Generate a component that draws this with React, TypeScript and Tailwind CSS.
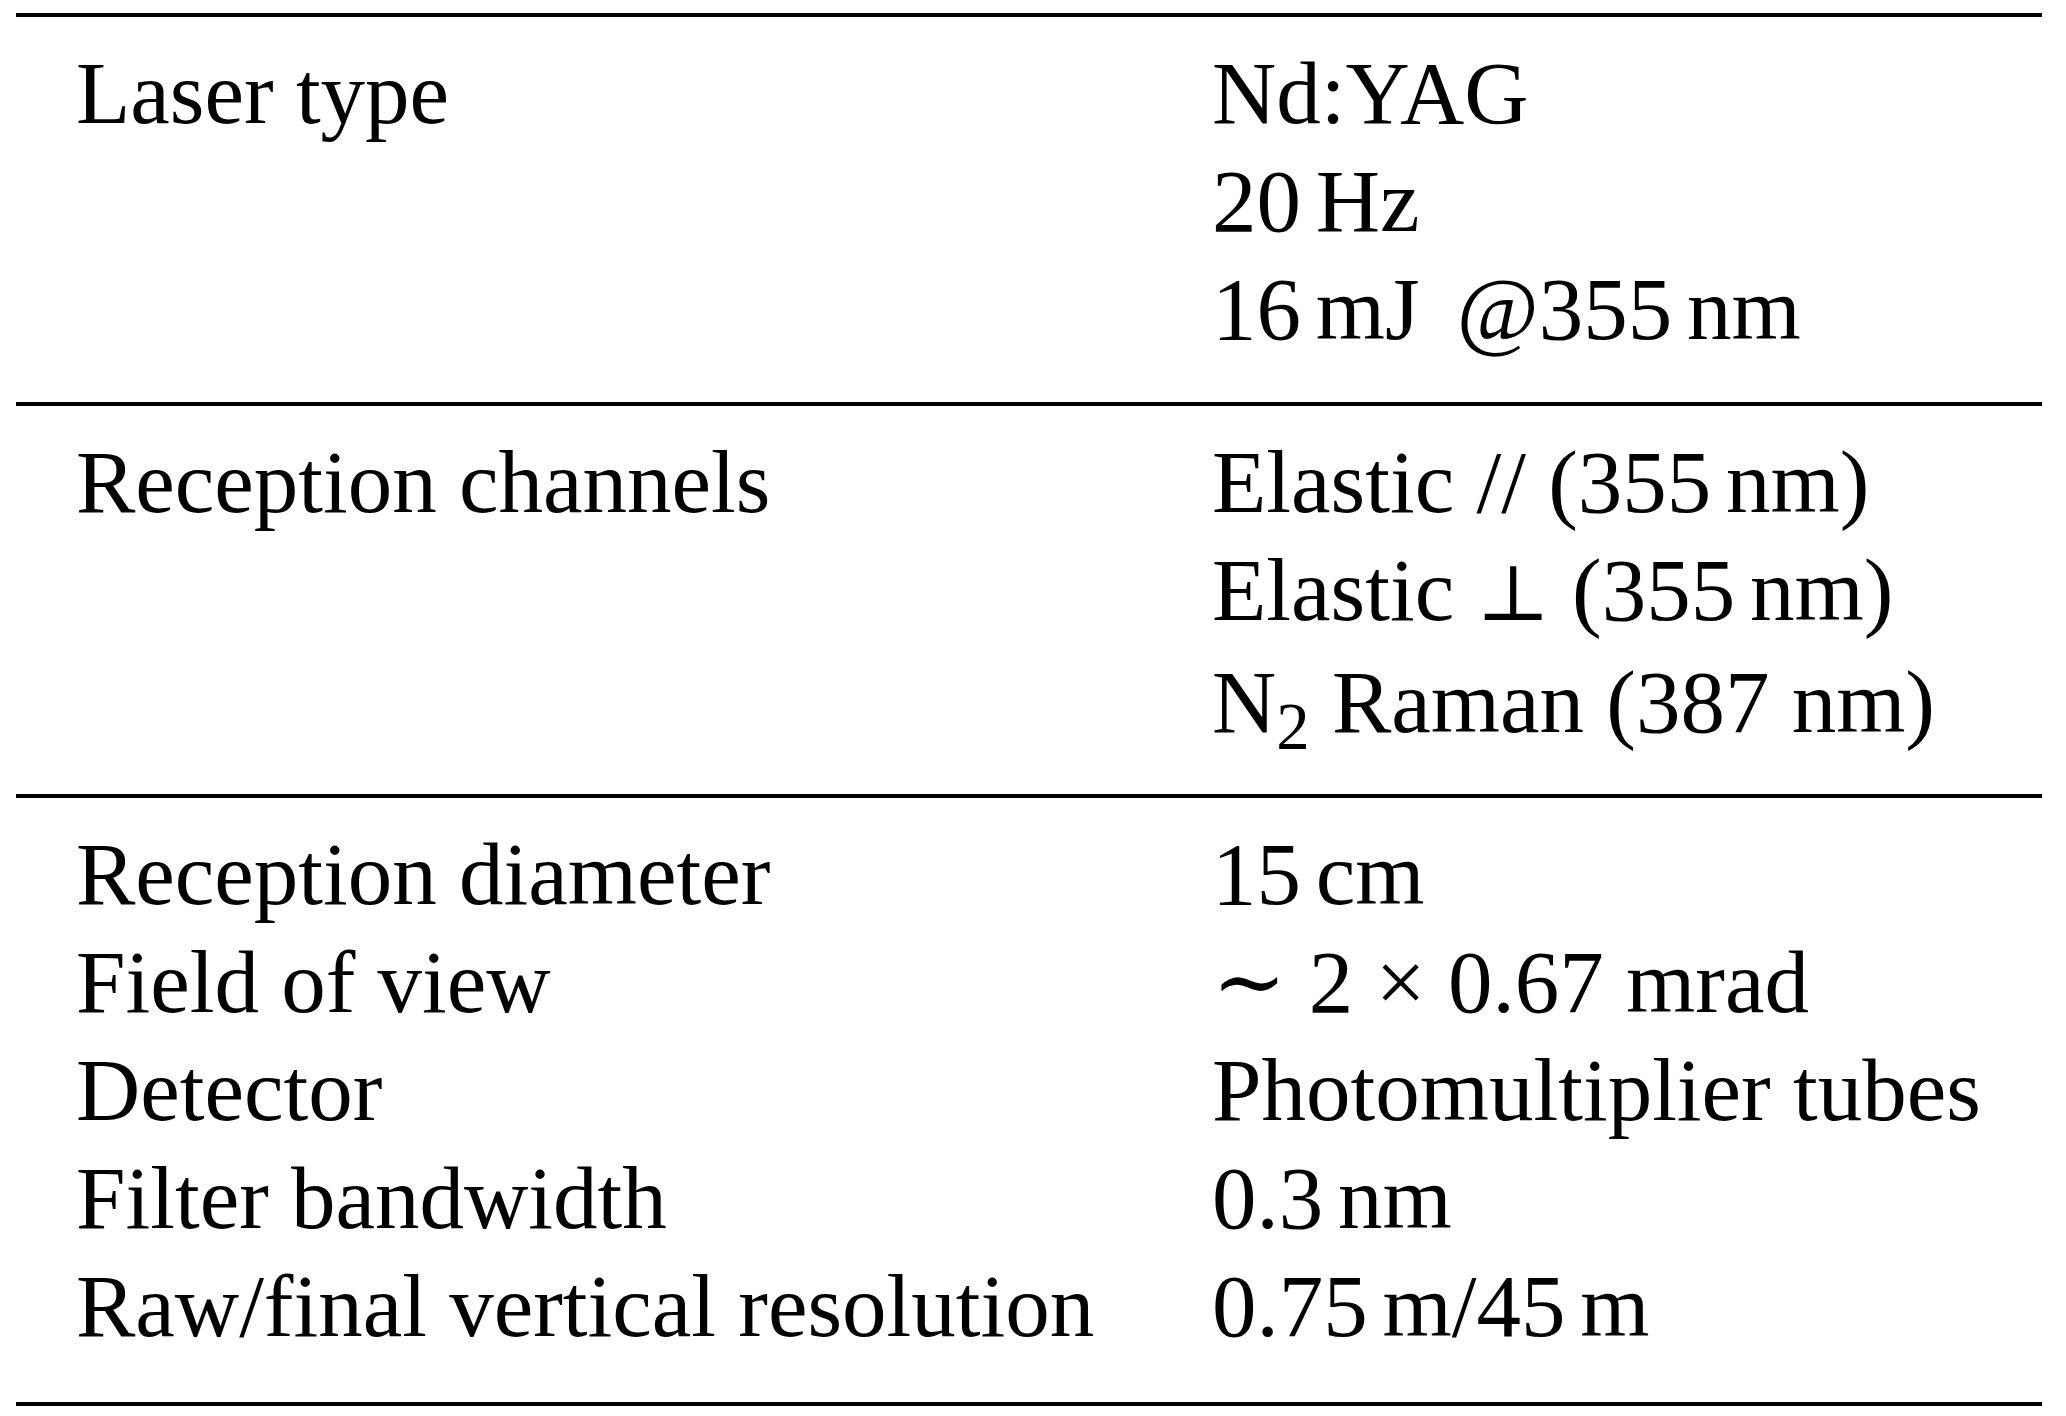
const groups: { label: string; value: React.ReactNode }[][] = [
  [
    { label: "Laser type", value: "Nd:YAG" },
    { label: "", value: "20\u2006Hz" },
    { label: "", value: "16\u2006mJ \u2006@355\u2006nm" },
  ],
  [
    { label: "Reception channels", value: "Elastic // (355\u2006nm)" },
    {
      label: "",
      value: (
        <>
          Elastic <span className="text-[78px]">{"\u22A5"}</span> (355{"\u2006"}nm)
        </>
      ),
    },
    {
      label: "",
      value: (
        <>
          N<sub>2</sub> Raman (387 nm)
        </>
      ),
    },
  ],
  [
    { label: "Reception diameter", value: "15\u2006cm" },
    { label: "Field of view", value: "\u223C 2 \u00D7 0.67 mrad" },
    { label: "Detector", value: "Photomultiplier tubes" },
    { label: "Filter bandwidth", value: "0.3\u2006nm" },
    { label: "Raw/final vertical resolution", value: "0.75\u2006m/45\u2006m" },
  ],
];

// bottom padding per block, the last one sits a bit lower
const padBottom = ["pb-[39px]", "pb-[38px]", "pb-[42px]"];

const App = () => {
  return (
    <div
      className="w-[2066px] h-[1416px] bg-white pt-[13px] pl-[16px] pr-[24px] text-black text-[89px] leading-[108px]"
      style={{ fontFamily: '"Liberation Serif", "DejaVu Serif", serif' }}
    >
      <div className="border-t-4 border-black">
        {groups.map((rows, gi) => (
          <div key={gi} className={`border-b-4 border-black pt-[22px] pl-[60px] ${padBottom[gi]}`}>
            {rows.map((row, ri) => (
              <div key={ri} className="grid grid-cols-[1136px_1fr]">
                <div className="whitespace-nowrap">{row.label}</div>
                <div className="whitespace-nowrap">{row.value}</div>
              </div>
            ))}
          </div>
        ))}
      </div>
    </div>
  );
};

export default App;
